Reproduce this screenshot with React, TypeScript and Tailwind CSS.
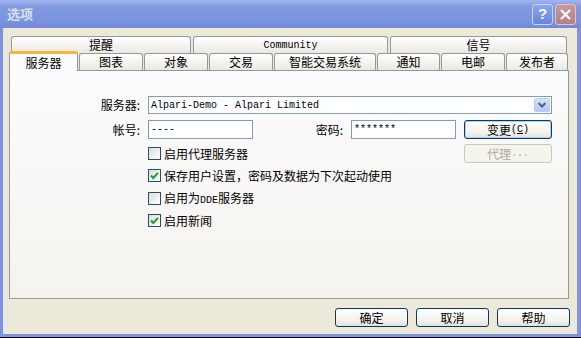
import React from 'react';

const cjk = "font-['Noto_Sans_CJK_SC',sans-serif]";
const mono = "font-['Liberation_Mono',monospace] text-[10px]";

const Tab: React.FC<{ label: React.ReactNode; w: string; active?: boolean }> = ({ label, w, active }) => {
  if (active) {
    return (
      <div
        className={`${w} relative z-10 h-[20px] -mb-[1px] flex items-center justify-center rounded-t-[3px] border-x border-[#919B9C] border-t-[3px] border-t-[#F7B33C] bg-[#FCFCFE] text-[12px] text-black ${cjk}`}
      >
        {label}
      </div>
    );
  }
  return (
    <div
      className={`${w} h-[17px] flex items-center justify-center rounded-t-[3px] border border-b-0 border-[#919B9C] bg-[linear-gradient(to_bottom,#FFFFFF,#F3F2ED_60%,#E9E8E1)] text-[12px] text-black ${cjk}`}
    >
      {label}
    </div>
  );
};

const Check: React.FC<{ checked?: boolean; label: React.ReactNode }> = ({ checked, label }) => (
  <div className="flex items-center h-[13px]">
    <div className="w-[13px] h-[13px] border border-[#1C5180] bg-[linear-gradient(135deg,#DCDCD7,#FFFFFF)] flex items-center justify-center">
      {checked && (
        <svg width="11" height="11" viewBox="0 0 11 11">
          <path d="M2 5.5 L4.3 8 L9 2.8" fill="none" stroke="#21A121" strokeWidth="2" />
        </svg>
      )}
    </div>
    <span className={`ml-[3px] text-[12px] leading-[13px] text-black whitespace-nowrap ${cjk}`}>{label}</span>
  </div>
);

const XpButton: React.FC<{ children: React.ReactNode; w: string; disabled?: boolean; focus?: boolean }> = ({ children, w, disabled, focus }) => (
  <div
    className={`${w} h-[19px] flex items-center justify-center rounded-[3px] border text-[12px] ${cjk} ${
      disabled
        ? 'border-[#C9C7BA] bg-[#F5F4EA] text-[#ACA899]'
        : 'border-[#003C74] bg-[linear-gradient(to_bottom,#FFFFFF,#F2F1EA_70%,#E3E1D7)] text-black'
    } ${focus ? 'shadow-[inset_0_0_0_1px_#B7CDF2]' : ''}`}
  >
    {children}
  </div>
);

export default function App() {
  return (
    <div className="w-[581px] h-[338px] bg-black overflow-hidden">
      <div className="h-[337px] flex flex-col bg-[#7D93E0]">
        {/* title bar */}
        <div className="h-[28px] flex items-center bg-[linear-gradient(to_bottom,#A1B5EC,#7F98E0_25%,#7B94DF_75%,#7189D8)]">
          <span className={`ml-[7px] text-[13px] font-bold text-[#D8E2F8] ${cjk}`}>选项</span>
          <div className="ml-auto mr-[5px] flex gap-[2px]">
            <div className="w-[21px] h-[21px] rounded-[3px] border border-[#C9D6F6] bg-[linear-gradient(to_bottom,#8AA6EE,#6486E2)] flex items-center justify-center text-white font-bold text-[15px] font-['Liberation_Sans',sans-serif]">
              ?
            </div>
            <div className="w-[21px] h-[21px] rounded-[3px] border border-[#E5C3C6] bg-[linear-gradient(to_bottom,#C99A9E,#B97D82)] flex items-center justify-center">
              <svg width="13" height="13" viewBox="0 0 13 13">
                <path d="M2 2 L11 11 M11 2 L2 11" stroke="white" strokeWidth="2.2" />
              </svg>
            </div>
          </div>
        </div>

        {/* dialog body */}
        <div className="ml-[3px] mr-[4px] h-[306px] bg-[#ECE9D8] pt-[8px]">
          <div className="ml-[8px] flex gap-[2px] h-[17px]">
            <Tab w="w-[180px]" label="提醒" />
            <Tab w="w-[195px]" label={<span className={mono}>Community</span>} />
            <Tab w="w-[177px]" label="信号" />
          </div>
          <div className="ml-[6px] flex items-end gap-[1px] h-[17px]">
            <Tab w="w-[69px]" label="服务器" active />
            <Tab w="w-[64px]" label="图表" />
            <Tab w="w-[64px]" label="对象" />
            <Tab w="w-[64px]" label="交易" />
            <Tab w="w-[102px]" label="智能交易系统" />
            <Tab w="w-[63px]" label="通知" />
            <Tab w="w-[64px]" label="电邮" />
            <Tab w="w-[62px]" label="发布者" />
          </div>

          {/* tab page */}
          <div className="ml-[6px] w-[560px] h-[229px] border border-[#919B9C] bg-[linear-gradient(to_bottom,#FCFCFE,#F4F3EE)] pt-[25px]">
            <div className="flex items-center h-[18px]">
              <div className={`w-[130px] text-right text-[12px] ${cjk}`}>服务器:</div>
              <div className="ml-[8px] w-[404px] h-[18px] border border-[#7F9DB9] bg-white flex items-center">
                <span className={`ml-[2px] ${mono} text-black`}>Alpari-Demo - Alpari Limited</span>
                <div className="ml-auto mr-px w-[16px] h-[14px] rounded-[2px] border border-[#B9CCF5] bg-[linear-gradient(to_bottom,#D6E2FD,#B4C8F6)] flex items-center justify-center">
                  <svg width="10" height="8" viewBox="0 0 10 8">
                    <path d="M1.5 2 L5 5.5 L8.5 2" fill="none" stroke="#4D6185" strokeWidth="2" />
                  </svg>
                </div>
              </div>
            </div>

            <div className="mt-[6px] flex items-center h-[19px]">
              <div className={`w-[130px] text-right text-[12px] ${cjk}`}>帐号:</div>
              <div className="ml-[8px] w-[105px] h-[19px] border border-[#7F9DB9] bg-white flex items-center">
                <span className={`ml-[2px] ${mono}`}>----</span>
              </div>
              <div className={`w-[90px] text-right text-[12px] ${cjk}`}>密码:</div>
              <div className="ml-[8px] w-[105px] h-[19px] border border-[#7F9DB9] bg-white flex items-center">
                <span className={`ml-[2px] ${mono}`}>*******</span>
              </div>
              <div className="ml-[8px]">
                <XpButton w="w-[88px]" focus>
                  变更<span className={mono}>(<span className="underline">C</span>)</span>
                </XpButton>
              </div>
            </div>

            <div className="mt-[5px] flex items-center h-[19px]">
              <div className="ml-[138px] w-[316px]">
                <Check label="启用代理服务器" />
              </div>
              <XpButton w="w-[88px]" disabled>
                代理<span className={mono}>...</span>
              </XpButton>
            </div>

            <div className="ml-[138px] mt-[6px] flex flex-col">
              <Check checked label="保存用户设置，密码及数据为下次起动使用" />
              <div className="mt-[10px]">
                <Check label={<>启用为<span className={mono}>DDE</span>服务器</>} />
              </div>
              <div className="mt-[9px]">
                <Check checked label="启用新闻" />
              </div>
            </div>
          </div>

          {/* buttons */}
          <div className="mt-[9px] mr-[7px] flex justify-end gap-[8px]">
            <XpButton w="w-[73px]">确定</XpButton>
            <XpButton w="w-[73px]">取消</XpButton>
            <XpButton w="w-[73px]">帮助</XpButton>
          </div>
        </div>
      </div>
    </div>
  );
}
